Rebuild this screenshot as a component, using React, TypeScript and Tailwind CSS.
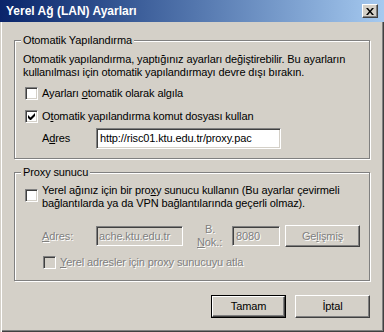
import type { ReactNode } from "react";

const sunken =
  "border border-t-[#808080] border-l-[#808080] border-b-white border-r-white shadow-[inset_1px_1px_0_#404040,inset_-1px_-1px_0_#d4d0c8]";
const raised =
  "border border-t-white border-l-white border-b-[#404040] border-r-[#404040] shadow-[inset_-1px_-1px_0_#808080]";
const disabledText = "text-[#808080] [text-shadow:1px_1px_0_#fff]";

function GroupBox({ title, children, className }: { title: string; children: ReactNode; className?: string }) {
  return (
    <div className={`relative border border-[#808080] shadow-[inset_1px_1px_0_#fff,1px_1px_0_#fff] ${className ?? ""}`}>
      <span className="absolute left-[6px] top-[-7px] bg-[#d4d0c8] px-[2px] leading-[13px]">{title}</span>
      {children}
    </div>
  );
}

function CheckBox({ checked, disabled }: { checked?: boolean; disabled?: boolean }) {
  return (
    <span className={`flex size-[13px] shrink-0 items-center justify-center ${sunken} ${disabled ? "bg-[#d4d0c8]" : "bg-white"}`}>
      {checked && (
        <svg width="7" height="7" viewBox="0 0 7 7">
          <path d="M0 2v3l2 2h1l4-4V0L2.5 4.5z" fill="#000" />
        </svg>
      )}
    </span>
  );
}

function Button({ label, isDefault, disabled, className }: { label: ReactNode; isDefault?: boolean; disabled?: boolean; className?: string }) {
  return (
    <div className={`${isDefault ? "border border-black" : ""} ${className ?? ""}`}>
      <div className={`flex h-full w-full items-center justify-center bg-[#d4d0c8] ${raised} ${disabled ? disabledText : ""}`}>
        {label}
      </div>
    </div>
  );
}

export default function App() {
  return (
    <div
      className="relative h-[332px] w-[384px] select-none overflow-hidden bg-[#d4d0c8] text-[11px] leading-[13px] tracking-[-0.12px] text-black shadow-[inset_1px_0_0_#d4d0c8,inset_2px_0_0_#fff,inset_-1px_-1px_0_#404040,inset_-2px_-2px_0_#808080]"
      style={{ fontFamily: '"Liberation Sans", Arial, sans-serif' }}
    >
      {/* title bar */}
      <div className="flex h-[22px] items-center justify-between bg-gradient-to-r from-[#0a246a] to-[#a6caf0] pl-[6px] pr-[6px]">
        <span className="text-[12px] font-bold tracking-normal text-white">Yerel Ağ (LAN) Ayarları</span>
        <div className={`flex h-[14px] w-[16px] items-center justify-center bg-[#d4d0c8] ${raised}`}>
          <svg width="8" height="7" viewBox="0 0 8 7">
            <path d="M0 0h2l2 2.5L6 0h2L5 3.5 8 7H6L4 4.5 2 7H0l3-3.5z" fill="#000" />
          </svg>
        </div>
      </div>

      <div className="px-[14px] pt-[18px]">
        <GroupBox title="Otomatik Yapılandırma" className="h-[119px] w-[356px] pl-[8px] pt-[12px]">
          <p>
            Otomatik yapılandırma, yaptığınız ayarları değiştirebilir. Bu ayarların
            <br />
            kullanılması için otomatik yapılandırmayı devre dışı bırakın.
          </p>
          <div className="mt-[8px] flex items-center gap-[4px] pl-[2px]">
            <CheckBox />
            <span>
              Ayarları <u>o</u>tomatik olarak algıla
            </span>
          </div>
          <div className="mt-[10px] flex items-center gap-[4px] pl-[2px]">
            <CheckBox checked />
            <span>
              O<u>t</u>omatik yapılandırma komut dosyası kullan
            </span>
          </div>
          <div className="mt-[5px] flex items-center pl-[19px]">
            <span className="w-[54px]">
              A<u>d</u>res
            </span>
            <div className={`flex h-[21px] w-[185px] items-center bg-white px-[3px] ${sunken}`}>
              http://risc01.ktu.edu.tr/proxy.pac
            </div>
          </div>
        </GroupBox>

        <GroupBox title="Proxy sunucu" className="mt-[13px] h-[109px] w-[356px] pl-[10px] pt-[16px]">
          <div className="flex items-start gap-[4px]">
            <CheckBox />
            <span className="-mt-[5px]">
              Yerel ağınız için bir pro<u>x</u>y sunucu kullanın (Bu ayarlar çevirmeli
              <br />
              bağlantılarda ya da VPN bağlantılarında geçerli olmaz).
            </span>
          </div>
          <div className="mt-[13px] flex items-center pl-[17px]">
            <span className={`w-[54px] ${disabledText}`}>
              <u>A</u>dres:
            </span>
            <div className={`flex h-[20px] w-[87px] items-center overflow-hidden bg-[#d4d0c8] px-[2px] ${sunken} ${disabledText}`}>
              <span className="whitespace-nowrap">ache.ktu.edu.tr</span>
            </div>
            <span className={`ml-[8px] flex w-[41px] flex-col pl-[6px] ${disabledText}`}>
              <span className="pl-[8px]">B.</span>
              <span>
                <u>N</u>ok.:
              </span>
            </span>
            <div className={`flex h-[20px] w-[48px] items-center bg-[#d4d0c8] px-[3px] ${sunken} ${disabledText}`}>8080</div>
            <Button
              disabled
              className="ml-[5px] h-[22px] w-[75px]"
              label={
                <span>
                  Ge<u>l</u>işmiş
                </span>
              }
            />
          </div>
          <div className="mt-[7px] flex items-center gap-[4px] pl-[18px]">
            <CheckBox disabled />
            <span className={disabledText}>
              <u>Y</u>erel adresler için proxy sunucuyu atla
            </span>
          </div>
        </GroupBox>

        <div className="mt-[14px] flex justify-end gap-[9px]">
          <Button isDefault className="h-[23px] w-[75px]" label="Tamam" />
          <Button className="h-[23px] w-[75px]" label="İptal" />
        </div>
      </div>
    </div>
  );
}
